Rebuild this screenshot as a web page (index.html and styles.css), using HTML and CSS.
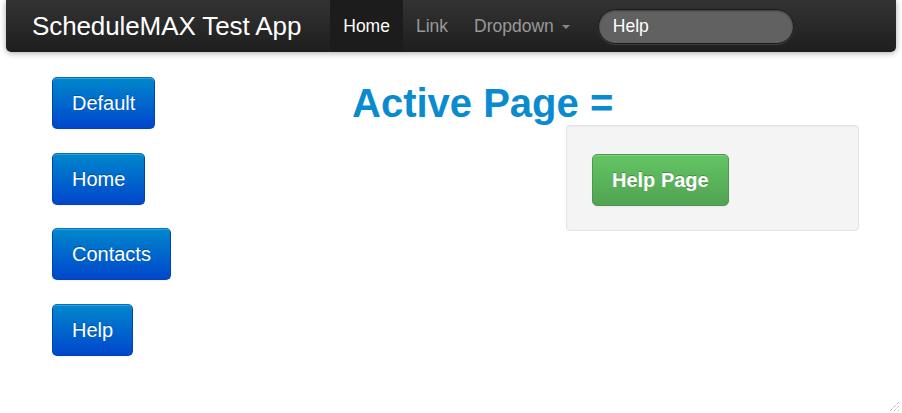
FILE: index.html
```html
<!DOCTYPE html>
<html>
<head>
<meta charset="utf-8">
<link rel="stylesheet" href="styles.css">
</head>
<body>
<div class="navbar">
  <a class="brand">ScheduleMAX Test App</a>
  <ul class="nav">
    <li class="active"><a>Home</a></li>
    <li><a>Link</a></li>
    <li><a>Dropdown <span class="caret"></span></a></li>
  </ul>
  <div class="search">Help</div>
</div>
<div class="main">
  <div class="sidebar">
    <a class="btn btn-primary">Default</a>
    <a class="btn btn-primary">Home</a>
    <a class="btn btn-primary">Contacts</a>
    <a class="btn btn-primary">Help</a>
  </div>
  <div class="content">
    <h1 class="title">Active Page =</h1>
    <div class="well">
      <a class="btn btn-success">Help Page</a>
    </div>
  </div>
</div>
<svg class="grip" width="12" height="12" viewBox="0 0 12 12">
  <path d="M11 2 L2 11 M11 6 L6 11 M11 10 L10 11" stroke="#999" stroke-width="1" stroke-dasharray="1 1" fill="none"/>
</svg>
</body>
</html>
```

FILE: styles.css
```css
html, body {
  margin: 0;
  padding: 0;
  background: #fff;
  font-family: "Liberation Sans", Arial, Helvetica, sans-serif;
  height: 413px;
  overflow: hidden;
}
.navbar {
  margin: 0 6px;
  height: 52px;
  display: flex;
  align-items: center;
  background: linear-gradient(#333333, #1e1e1e);
  border-radius: 0 0 5px 5px;
  box-shadow: 0 1px 6px rgba(0,0,0,0.35);
  padding-left: 26px;
  box-sizing: border-box;
}
.brand {
  color: #fff;
  font-size: 26px;
  margin-right: 29px;
  letter-spacing: -0.1px;
}
.nav {
  list-style: none;
  margin: 0;
  padding: 0;
  display: flex;
  height: 52px;
}
.nav li a {
  display: flex;
  align-items: center;
  height: 52px;
  padding: 0 13px;
  color: #999;
  font-size: 17.5px;
  box-sizing: border-box;
}
.nav li.active a {
  background: #1c1c1c;
  color: #fff;
}
.caret {
  display: inline-block;
  width: 0;
  height: 0;
  border-left: 4.5px solid transparent;
  border-right: 4.5px solid transparent;
  border-top: 4.5px solid #888;
  margin-left: 8px;
  margin-top: 1px;
}
.search {
  margin-left: 15px;
  width: 196px;
  height: 35px;
  box-sizing: border-box;
  border-radius: 18px;
  background: #616161;
  border: 1px solid #1a1a1a;
  box-shadow: inset 0 1px 2px rgba(0,0,0,0.4), 0 1px 0 rgba(255,255,255,0.12);
  color: #fff;
  font-size: 17.5px;
  padding-left: 14px;
  display: flex;
  align-items: center;
}
.main {
  display: flex;
  padding-top: 25px;
}
.sidebar {
  width: 300px;
  padding-left: 52px;
  display: flex;
  flex-direction: column;
  align-items: flex-start;
  gap: 23.5px;
}
.btn {
  display: inline-block;
  font-size: 20px;
  line-height: 24px;
  padding: 13px 19px 13px 19px;
  border-radius: 5px;
  color: #fff;
  text-shadow: 0 -1px 0 rgba(0,0,0,0.25);
  box-shadow: inset 0 1px 0 rgba(255,255,255,0.2), 0 1px 2px rgba(0,0,0,0.05);
}
.btn-primary {
  background: linear-gradient(#0088cc, #0046cc);
  border: 1px solid #0044b0;
  border-top-color: #0070c0;
}
.btn-success {
  background: linear-gradient(#64c564, #51a351);
  border: 1px solid #4a994a;
  font-weight: bold;
  padding: 13px 19px;
}
.content {
  padding-top: 4px;
}
.title {
  margin: 0;
  font-size: 40px;
  line-height: 44px;
  font-weight: bold;
  color: #0a8bd0;
}
.well {
  margin-left: 214px;
  width: 293px;
  height: 106px;
  box-sizing: border-box;
  background: #f4f4f4;
  border: 1px solid #e3e3e3;
  border-radius: 4px;
  box-shadow: inset 0 1px 1px rgba(0,0,0,0.04);
  padding: 28px 25px;
}
.grip {
  position: absolute;
  right: 2px;
  top: 400px;
}
```
